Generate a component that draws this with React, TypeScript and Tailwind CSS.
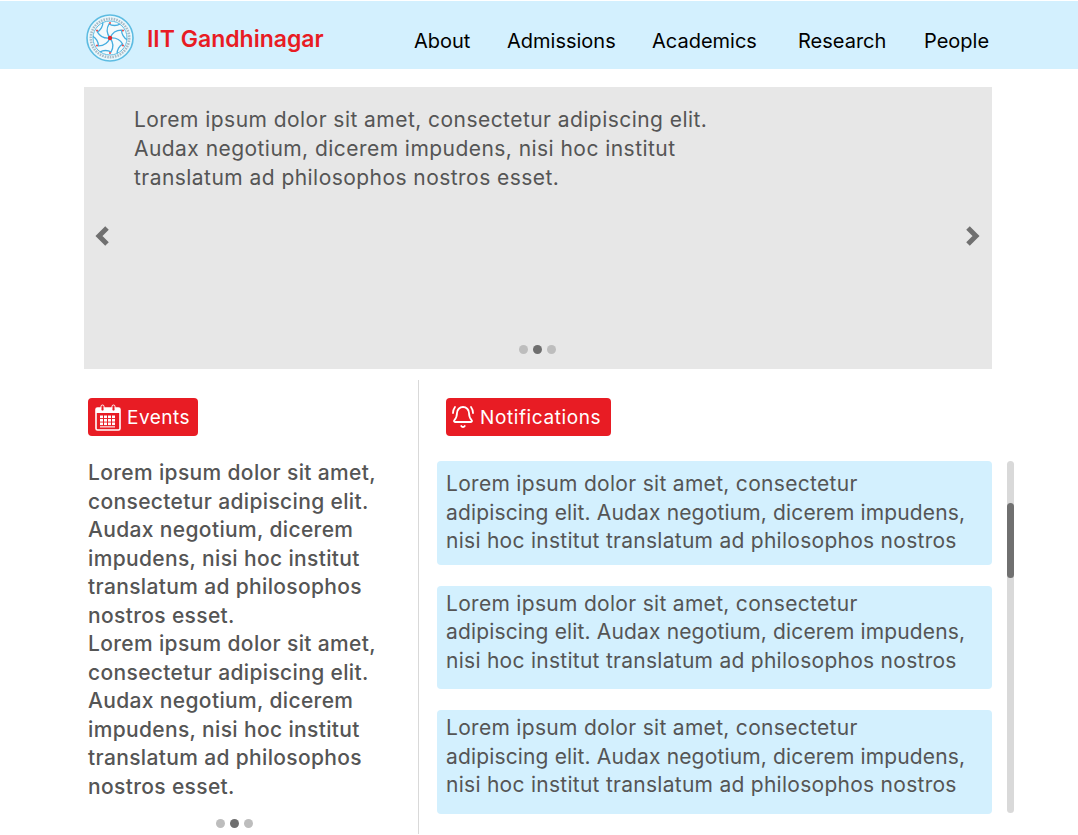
import { BellRing } from "lucide-react";

const lorem = "Lorem ipsum dolor sit amet, consectetur adipiscing elit. Audax negotium, dicerem impudens, nisi hoc institut translatum ad philosophos nostros esset.";
const navItems = [
  { label: "About", cls: "left-[414px]" },
  { label: "Admissions", cls: "left-[507px]" },
  { label: "Academics", cls: "left-[652px]" },
  { label: "Research", cls: "left-[798px]" },
  { label: "People", cls: "left-[924px]" },
];

function Logo() {
  return (
    <svg width="48" height="48" viewBox="0 0 48 48" className="shrink-0">
      <circle cx="24" cy="24" r="23" fill="#e9f7fc" stroke="#5dbce2" strokeWidth="1.6" />
      <circle cx="24" cy="24" r="19.2" fill="#f4fafc" stroke="#a9bcc8" strokeWidth="2.6" strokeDasharray="1.6 1" />
      <circle cx="24" cy="24" r="17" fill="none" stroke="#5dbce2" strokeWidth="1" />
      {[0, 60, 120, 180, 240, 300].map((a) => (
        <g key={a} transform={`rotate(${a} 24 24)`}>
          <path d="M24 24 C21 20 20 15 23 10 C26 12 31 12 34 10" fill="none" stroke="#45aee0" strokeWidth="1.3" />
          <circle cx="24" cy="9" r="1" fill="#e8474c" />
        </g>
      ))}
      <circle cx="24" cy="24" r="2.2" fill="#e0282e" />
    </svg>
  );
}

function CalendarIcon() {
  return (
    <svg width="26" height="27" viewBox="0 0 26 27" className="shrink-0">
      <rect x="1" y="4" width="24" height="22" rx="1.5" fill="none" stroke="#fff" strokeWidth="1.6" />
      <rect x="1" y="4" width="24" height="5" fill="#fff" />
      <rect x="6" y="1" width="3" height="6" rx="1.5" fill="#e81c24" stroke="#fff" strokeWidth="1" />
      <rect x="17" y="1" width="3" height="6" rx="1.5" fill="#e81c24" stroke="#fff" strokeWidth="1" />
      {[11.5, 15, 18.5].map((y) =>
        [5, 9, 13, 17].map((x) => (
          <rect key={`${x}-${y}`} x={x} y={y} width="3" height="2.6" fill="#fff" />
        ))
      )}
      <rect x="5" y="22" width="15" height="1.6" fill="#f8b9bc" />
    </svg>
  );
}

function Chevron({ flip, className }: { flip?: boolean; className: string }) {
  return (
    <svg width="16" height="20" viewBox="0 0 16 20" className={className}>
      <polyline
        points={flip ? "4,2 12,10 4,18" : "12,2 4,10 12,18"}
        fill="none"
        stroke="#707070"
        strokeWidth="5"
        strokeLinejoin="miter"
      />
    </svg>
  );
}

function Dots({ className }: { className: string }) {
  return (
    <div className={`flex gap-[5px] ${className}`}>
      <span className="h-[9px] w-[9px] rounded-full bg-[#bdbdbd]" />
      <span className="h-[9px] w-[9px] rounded-full bg-[#6e6e6e]" />
      <span className="h-[9px] w-[9px] rounded-full bg-[#bdbdbd]" />
    </div>
  );
}

export default function App() {
  return (
    <div className="h-[835px] w-[1078px] overflow-hidden bg-white pt-px font-['Inter',sans-serif] text-[#555]">
      {/* HEADER */}
      <header className="relative flex h-[68px] items-center bg-[#d3f0fe] pl-[86px] pt-[6px]">
        <Logo />
        <span className="ml-[13px] mt-[3px] text-[23px] font-semibold text-[#e81c24]">IIT Gandhinagar</span>
        {navItems.map((n) => (
          <a key={n.label} className={`absolute top-[26px] text-[20px] leading-[28px] text-black ${n.cls}`}>
            {n.label}
          </a>
        ))}
      </header>

      {/* HERO */}
      <section className="relative mx-[84px] mt-[18px] h-[282px] w-[908px] bg-[#e7e7e7] pl-[50px] pt-[18px]">
        <p className="w-[590px] text-[21px] leading-[29px] tracking-[0.45px]">{lorem}</p>
        <Chevron className="absolute left-[11px] top-[139px]" />
        <Chevron flip className="absolute right-[12px] top-[139px]" />
        <Dots className="absolute bottom-[15px] left-[435px]" />
      </section>

      <div className="mt-[11px] flex h-[454px]">
        {/* EVENTS */}
        <section className="relative ml-[88px] w-[331px] border-r border-[#d9d9d9] pt-[18px]">
          <div className="flex h-[38px] w-[110px] items-center gap-[6px] rounded-[4px] bg-[#e81c24] pl-[7px] text-[19px] tracking-[0.5px] text-white">
            <CalendarIcon />
            <span className="pt-[2px]">Events</span>
          </div>
          <p className="mt-[23px] w-[300px] text-[21px] font-medium leading-[28.5px] tracking-[0.35px]">{lorem}</p>
          <p className="w-[300px] text-[21px] font-medium leading-[28.5px] tracking-[0.35px]">{lorem}</p>
          <Dots className="absolute bottom-[6px] left-[128px]" />
        </section>

        {/* NOTIFICATIONS */}
        <section className="ml-[18px] w-[577px] pt-[18px]">
          <div className="ml-[9px] flex h-[38px] w-[165px] items-center gap-[5px] rounded-[4px] bg-[#e81c24] pl-[5px] text-[19px] tracking-[0.6px] text-white">
            <BellRing className="h-[24px] w-[24px]" strokeWidth={1.8} />
            <span className="pt-[2px]">Notifications</span>
          </div>
          <div className="mt-[25px] flex gap-[15px]">
            <div className="flex w-[555px] flex-col gap-[21px]">
              {["pt-[9px]", "pt-[4px]", "pt-[4px]"].map((pad, i) => (
                <div key={i} className={`h-[103.5px] whitespace-nowrap rounded-[4px] bg-[#d3f0fe] pl-[9px] text-[21px] leading-[28.6px] tracking-[0.15px] ${pad}`}>
                  <span className="tracking-[0.3px]">Lorem ipsum dolor sit amet, consectetur</span>
                  <br />
                  adipiscing elit. Audax negotium, dicerem impudens,
                  <br />
                  <span className="tracking-[0.27px]">nisi hoc institut translatum ad philosophos nostros</span>
                </div>
              ))}
            </div>
            <div className="relative h-[352px] w-[7px] rounded-full bg-[#d9d9d9]">
              <div className="absolute top-[42px] h-[75px] w-[7px] rounded-full bg-[#707070]" />
            </div>
          </div>
        </section>
      </div>
    </div>
  );
}
